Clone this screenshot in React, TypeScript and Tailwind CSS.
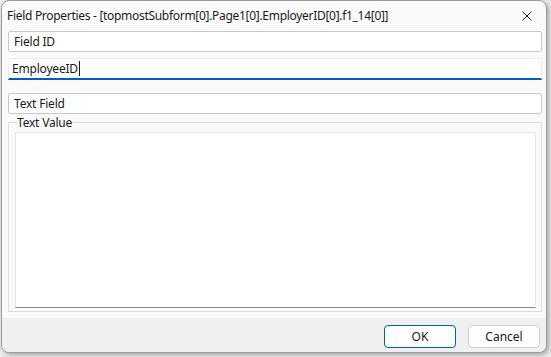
import React from "react";

const font = { fontFamily: '"Segoe UI", "Noto Sans", "Open Sans", sans-serif' };

export default function App() {
  return (
    <div className="w-[551px] h-[357px] bg-[#ececec] overflow-hidden" style={font}>
      <div className="ml-[1px] w-[546px] h-[353px] rounded-[8px] border border-[#9a9a9a] bg-[#fafafa] shadow-[2px_2px_5px_rgba(0,0,0,0.3)] flex flex-col overflow-hidden">
        {/* Title bar */}
        <div className="h-[30px] flex items-center justify-between pl-[5px] pr-[10px] shrink-0">
          <span className="text-[12px] text-[#1a1a1a] leading-none tracking-[-0.3px]">
            Field Properties - [topmostSubform[0].Page1[0].EmployerID[0].f1_14[0]]
          </span>
          <svg width="10" height="10" viewBox="0 0 10 10" className="mr-[4px]">
            <path d="M0.5 0.5 L9.5 9.5 M9.5 0.5 L0.5 9.5" stroke="#1a1a1a" strokeWidth="1" />
          </svg>
        </div>
        {/* Body */}
        <div className="flex-1 flex flex-col pl-[6px]">
          <div className="w-[534px] h-[21px] bg-white border border-[#c8c8c8] rounded-[2px] flex items-center pl-[5px] text-[12px] text-[#1a1a1a] tracking-[-0.2px]">
            Field ID
          </div>
          <div className="mt-[6px] w-[534px] h-[22px] bg-white border-t border-x border-[#ececec] border-b-2 border-b-[#005fb8] rounded-t-[2px] flex items-center pl-[3px] text-[12px] text-[#1a1a1a] tracking-[-0.2px]">
            EmployeeID<span className="inline-block w-[1px] h-[15px] bg-[#1a1a1a] ml-[1px]" />
          </div>
          <div className="mt-[13px] w-[534px] h-[21px] bg-white border border-[#c8c8c8] rounded-[2px] flex items-center pl-[5px] text-[12px] text-[#1a1a1a] tracking-[-0.2px]">
            Text Field
          </div>
          {/* Group box */}
          <div className="mt-[5px] w-[534px] h-[193px] relative">
            <div className="absolute left-0 right-0 top-[3px] bottom-0 border border-[#dcdcdc] shadow-[inset_1px_1px_0_#ffffff]" />
            <span className="absolute left-[9px] top-[-4px] bg-[#fafafa] text-[12px] text-[#1a1a1a] leading-[16px] tracking-[-0.2px]">
              Text Value
            </span>
            <div className="absolute left-[7px] top-[13px] w-[521px] h-[176px] bg-white border border-[#e6e6e6] border-b-[#8a8a8a]" />
          </div>
        </div>
        {/* Footer */}
        <div className="h-[34px] bg-[#f0f0f0] flex items-start justify-end pr-[6px] pt-[7px] gap-[12px] shrink-0">
          <button className="w-[72px] h-[23px] bg-[#fdfdfd] border border-[#005fb8] rounded-[4px] text-[12px] text-[#1a1a1a] flex items-center justify-center">
            OK
          </button>
          <button className="w-[72px] h-[23px] bg-[#fdfdfd] border border-[#d0d0d0] rounded-[4px] text-[12px] text-[#1a1a1a] flex items-center justify-center">
            Cancel
          </button>
        </div>
      </div>
    </div>
  );
}
